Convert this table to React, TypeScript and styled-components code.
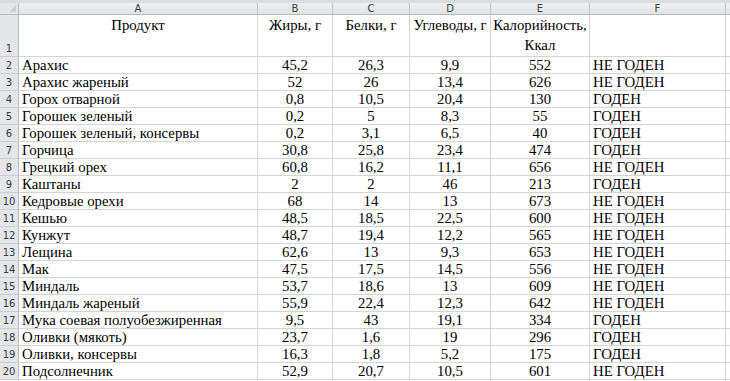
import React from 'react';
import styled, { createGlobalStyle } from 'styled-components';

const GlobalStyle = createGlobalStyle`
  html, body {
    margin: 0;
    padding: 0;
    background: #ffffff;
  }
`;

const COLS = [19, 239, 75, 77, 81, 99, 136];
const LETTERS = ['A', 'B', 'C', 'D', 'E', 'F'];

type Row = [string, string, string, string, string, string];

const rows: Row[] = [
  ['Арахис', '45,2', '26,3', '9,9', '552', 'НЕ ГОДЕН'],
  ['Арахис жареный', '52', '26', '13,4', '626', 'НЕ ГОДЕН'],
  ['Горох отварной', '0,8', '10,5', '20,4', '130', 'ГОДЕН'],
  ['Горошек зеленый', '0,2', '5', '8,3', '55', 'ГОДЕН'],
  ['Горошек зеленый, консервы', '0,2', '3,1', '6,5', '40', 'ГОДЕН'],
  ['Горчица', '30,8', '25,8', '23,4', '474', 'ГОДЕН'],
  ['Грецкий орех', '60,8', '16,2', '11,1', '656', 'НЕ ГОДЕН'],
  ['Каштаны', '2', '2', '46', '213', 'ГОДЕН'],
  ['Кедровые орехи', '68', '14', '13', '673', 'НЕ ГОДЕН'],
  ['Кешью', '48,5', '18,5', '22,5', '600', 'НЕ ГОДЕН'],
  ['Кунжут', '48,7', '19,4', '12,2', '565', 'НЕ ГОДЕН'],
  ['Лещина', '62,6', '13', '9,3', '653', 'НЕ ГОДЕН'],
  ['Мак', '47,5', '17,5', '14,5', '556', 'НЕ ГОДЕН'],
  ['Миндаль', '53,7', '18,6', '13', '609', 'НЕ ГОДЕН'],
  ['Миндаль жареный', '55,9', '22,4', '12,3', '642', 'НЕ ГОДЕН'],
  ['Мука соевая полуобезжиренная', '9,5', '43', '19,1', '334', 'ГОДЕН'],
  ['Оливки (мякоть)', '23,7', '1,6', '19', '296', 'ГОДЕН'],
  ['Оливки, консервы', '16,3', '1,8', '5,2', '175', 'ГОДЕН'],
  ['Подсолнечник', '52,9', '20,7', '10,5', '601', 'НЕ ГОДЕН'],
];

const headings = ['Продукт', 'Жиры, г', 'Белки, г', 'Углеводы, г', 'Калорийность, Ккал', ''];

const Sheet = styled.div`
  display: grid;
  grid-template-columns: ${COLS.map((c) => `${c}px`).join(' ')} 1fr;
  grid-template-rows: 12px 42px repeat(${rows.length}, 17px);
  border-top: 3px solid #d9dde2;
  width: 730px;
  background: #fff;
  font-family: 'Liberation Serif', 'Times New Roman', serif;
  font-size: 14.8px;
  color: #000;
`;

const Corner = styled.div`
  position: relative;
  background: #e4e6e9;
  border-right: 1px solid #b7bbc1;
  border-bottom: 1px solid #b7bbc1;

  &::after {
    content: '';
    position: absolute;
    right: 2px;
    bottom: 2px;
    border-left: 7px solid transparent;
    border-bottom: 7px solid #c9ccd1;
  }
`;

const ColHead = styled.div`
  background: linear-gradient(#eef0f2, #e0e3e7);
  border-right: 1px solid #bec3c9;
  border-bottom: 1px solid #b7bbc1;
  font-family: 'DejaVu Sans', 'Liberation Sans', sans-serif;
  font-size: 10px;
  color: #3b3b3b;
  display: flex;
  align-items: center;
  justify-content: center;
  line-height: 1;
`;

const RowHead = styled.div<{ $tall?: boolean }>`
  background: #e4e6e9;
  border-right: 1px solid #b7bbc1;
  border-bottom: 1px solid #c9ccd1;
  font-family: 'DejaVu Sans', 'Liberation Sans', sans-serif;
  font-size: 10px;
  color: #3b3b3b;
  display: flex;
  align-items: ${(p) => (p.$tall ? 'flex-end' : 'center')};
  justify-content: center;
  padding-bottom: ${(p) => (p.$tall ? '2px' : '0')};
`;

const Cell = styled.div<{ $center?: boolean; $head?: boolean }>`
  border-right: 1px solid #d4d4d4;
  border-bottom: 1px solid #d4d4d4;
  padding: ${(p) => (p.$head ? '0 2px' : '0 3px')};
  text-align: ${(p) => (p.$center ? 'center' : 'left')};
  line-height: ${(p) => (p.$head ? '20px' : '16px')};
  white-space: ${(p) => (p.$head ? 'normal' : 'nowrap')};
  overflow: hidden;
`;

const Filler = styled.div`
  border-bottom: 1px solid #d4d4d4;
`;

const HeadFiller = styled.div`
  background: linear-gradient(#eef0f2, #e0e3e7);
  border-bottom: 1px solid #b7bbc1;
`;

export default function App() {
  return (
    <>
      <GlobalStyle />
      <Sheet>
        <Corner />
        {LETTERS.map((l) => (
          <ColHead key={l}>{l}</ColHead>
        ))}
        <HeadFiller />

        <RowHead $tall>1</RowHead>
        {headings.map((h, i) => (
          <Cell key={i} $center $head>
            {h}
          </Cell>
        ))}
        <Filler />

        {rows.map((r, idx) => (
          <React.Fragment key={idx}>
            <RowHead>{idx + 2}</RowHead>
            {r.map((v, i) => (
              <Cell key={i} $center={i > 0 && i < 5}>
                {v}
              </Cell>
            ))}
            <Filler />
          </React.Fragment>
        ))}
      </Sheet>
    </>
  );
}
